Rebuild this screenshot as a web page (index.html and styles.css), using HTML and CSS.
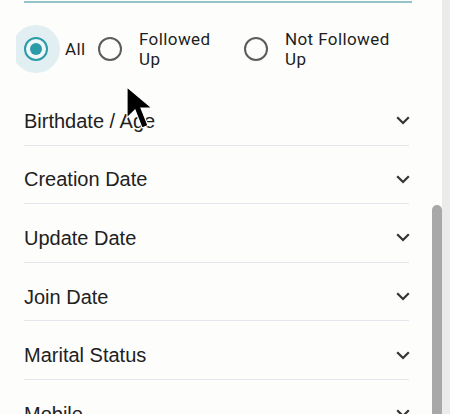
FILE: index.html
```html
<!DOCTYPE html>
<html lang="en">
<head>
<meta charset="utf-8">
<title>Filters</title>
<link rel="stylesheet" href="styles.css">
</head>
<body>
<div class="page">
  <main class="panel">
    <div class="top-line"></div>
    <div class="radio-clip">
      <div class="radio-group">
        <label class="opt opt-all">
          <span class="ring checked"><span class="dot"></span></span>
          <span class="opt-label">All</span>
        </label>
        <label class="opt opt-followed">
          <span class="ring"></span>
          <span class="opt-label narrow">Followed Up</span>
        </label>
        <label class="opt opt-not">
          <span class="ring"></span>
          <span class="opt-label narrow">Not Followed Up</span>
        </label>
      </div>
    </div>
    <ul class="rows">
      <li class="row"><span>Birthdate / Age</span><svg class="chev" width="14" height="9" viewBox="0 0 14 9"><polyline points="1.2,1.2 7,7 12.8,1.2"/></svg></li>
      <li class="row"><span>Creation Date</span><svg class="chev" width="14" height="9" viewBox="0 0 14 9"><polyline points="1.2,1.2 7,7 12.8,1.2"/></svg></li>
      <li class="row"><span>Update Date</span><svg class="chev" width="14" height="9" viewBox="0 0 14 9"><polyline points="1.2,1.2 7,7 12.8,1.2"/></svg></li>
      <li class="row"><span>Join Date</span><svg class="chev" width="14" height="9" viewBox="0 0 14 9"><polyline points="1.2,1.2 7,7 12.8,1.2"/></svg></li>
      <li class="row"><span>Marital Status</span><svg class="chev" width="14" height="9" viewBox="0 0 14 9"><polyline points="1.2,1.2 7,7 12.8,1.2"/></svg></li>
      <li class="row"><span>Mobile</span><svg class="chev" width="14" height="9" viewBox="0 0 14 9"><polyline points="1.2,1.2 7,7 12.8,1.2"/></svg></li>
    </ul>
  </main>
  <div class="inner-scroll"><div class="thumb"></div></div>
  <div class="outer-track"></div>
  <svg class="cursor" width="30" height="46" viewBox="0 0 30 46"><polygon points="1,1 1,32 9,24 16,42 22,39.5 15,22 26,22"/></svg>
</div>
</body>
</html>
```
FILE: styles.css
```css
* { box-sizing: border-box; }
html, body { margin: 0; padding: 0; }
body {
  background: #fdfdfc;
  font-family: "Liberation Sans", Arial, sans-serif;
  color: #212121;
}
.page {
  position: relative;
  display: flex;
  width: 450px;
  height: 414px;
  overflow: hidden;
}
.panel {
  flex: 1;
  min-width: 0;
  padding: 1px 20px 0 24px;
}
.top-line {
  height: 2px;
  background: #94c4ca;
}
.radio-clip {
  margin: 22px 0 0 -8px;
  padding-left: 8px;
  overflow: hidden;
}
.radio-group {
  display: flex;
  align-items: center;
  height: 48px;
  font-family: Roboto, "Liberation Sans", sans-serif;
  font-size: 17px;
  letter-spacing: 0.4px;
  line-height: 20px;
  color: #1e1e1e;
}
.opt {
  display: flex;
  align-items: center;
  flex: none;
}
.opt-all { width: 74px; }
.opt-followed { width: 146px; }
.opt-not { flex: 1; }
.ring {
  flex: none;
  width: 24px;
  height: 24px;
  border: 2.4px solid #5c5c5c;
  border-radius: 50%;
  display: flex;
  align-items: center;
  justify-content: center;
}
.ring.checked {
  border-color: #2a9ba7;
  background: #eef6f7;
  box-shadow: 0 0 0 12px #e1eff2;
}
.dot {
  width: 12px;
  height: 12px;
  border-radius: 50%;
  background: #2a9ba7;
}
.opt-label { margin-left: 17px; }
.opt-label.narrow { width: 86px; }
.opt-not .opt-label.narrow { width: 120px; }
.rows {
  list-style: none;
  margin: 14px 3px 0 0;
  padding: 0;
}
.row {
  display: flex;
  align-items: center;
  justify-content: space-between;
  height: 58.6px;
  padding-top: 11px;
  border-bottom: 1px solid #e4e6eb;
  font-size: 20px;
  line-height: 23px;
  color: #212121;
}
.chev {
  flex: none;
  margin-right: -1px;
  margin-top: -1px;
  fill: none;
  stroke: #333;
  stroke-width: 2.2;
}
.inner-scroll {
  flex: none;
  width: 10px;
  padding-top: 205px;
}
.thumb {
  height: 240px;
  background: #a8a8a8;
  border-radius: 5px 5px 0 0;
}
.outer-track {
  flex: none;
  width: 8px;
  background: #ebebeb;
}
.cursor {
  position: absolute;
  left: 126px;
  top: 86px;
}
.cursor polygon {
  fill: #000;
  stroke: #fff;
  stroke-width: 1.2;
  stroke-linejoin: miter;
}
```
